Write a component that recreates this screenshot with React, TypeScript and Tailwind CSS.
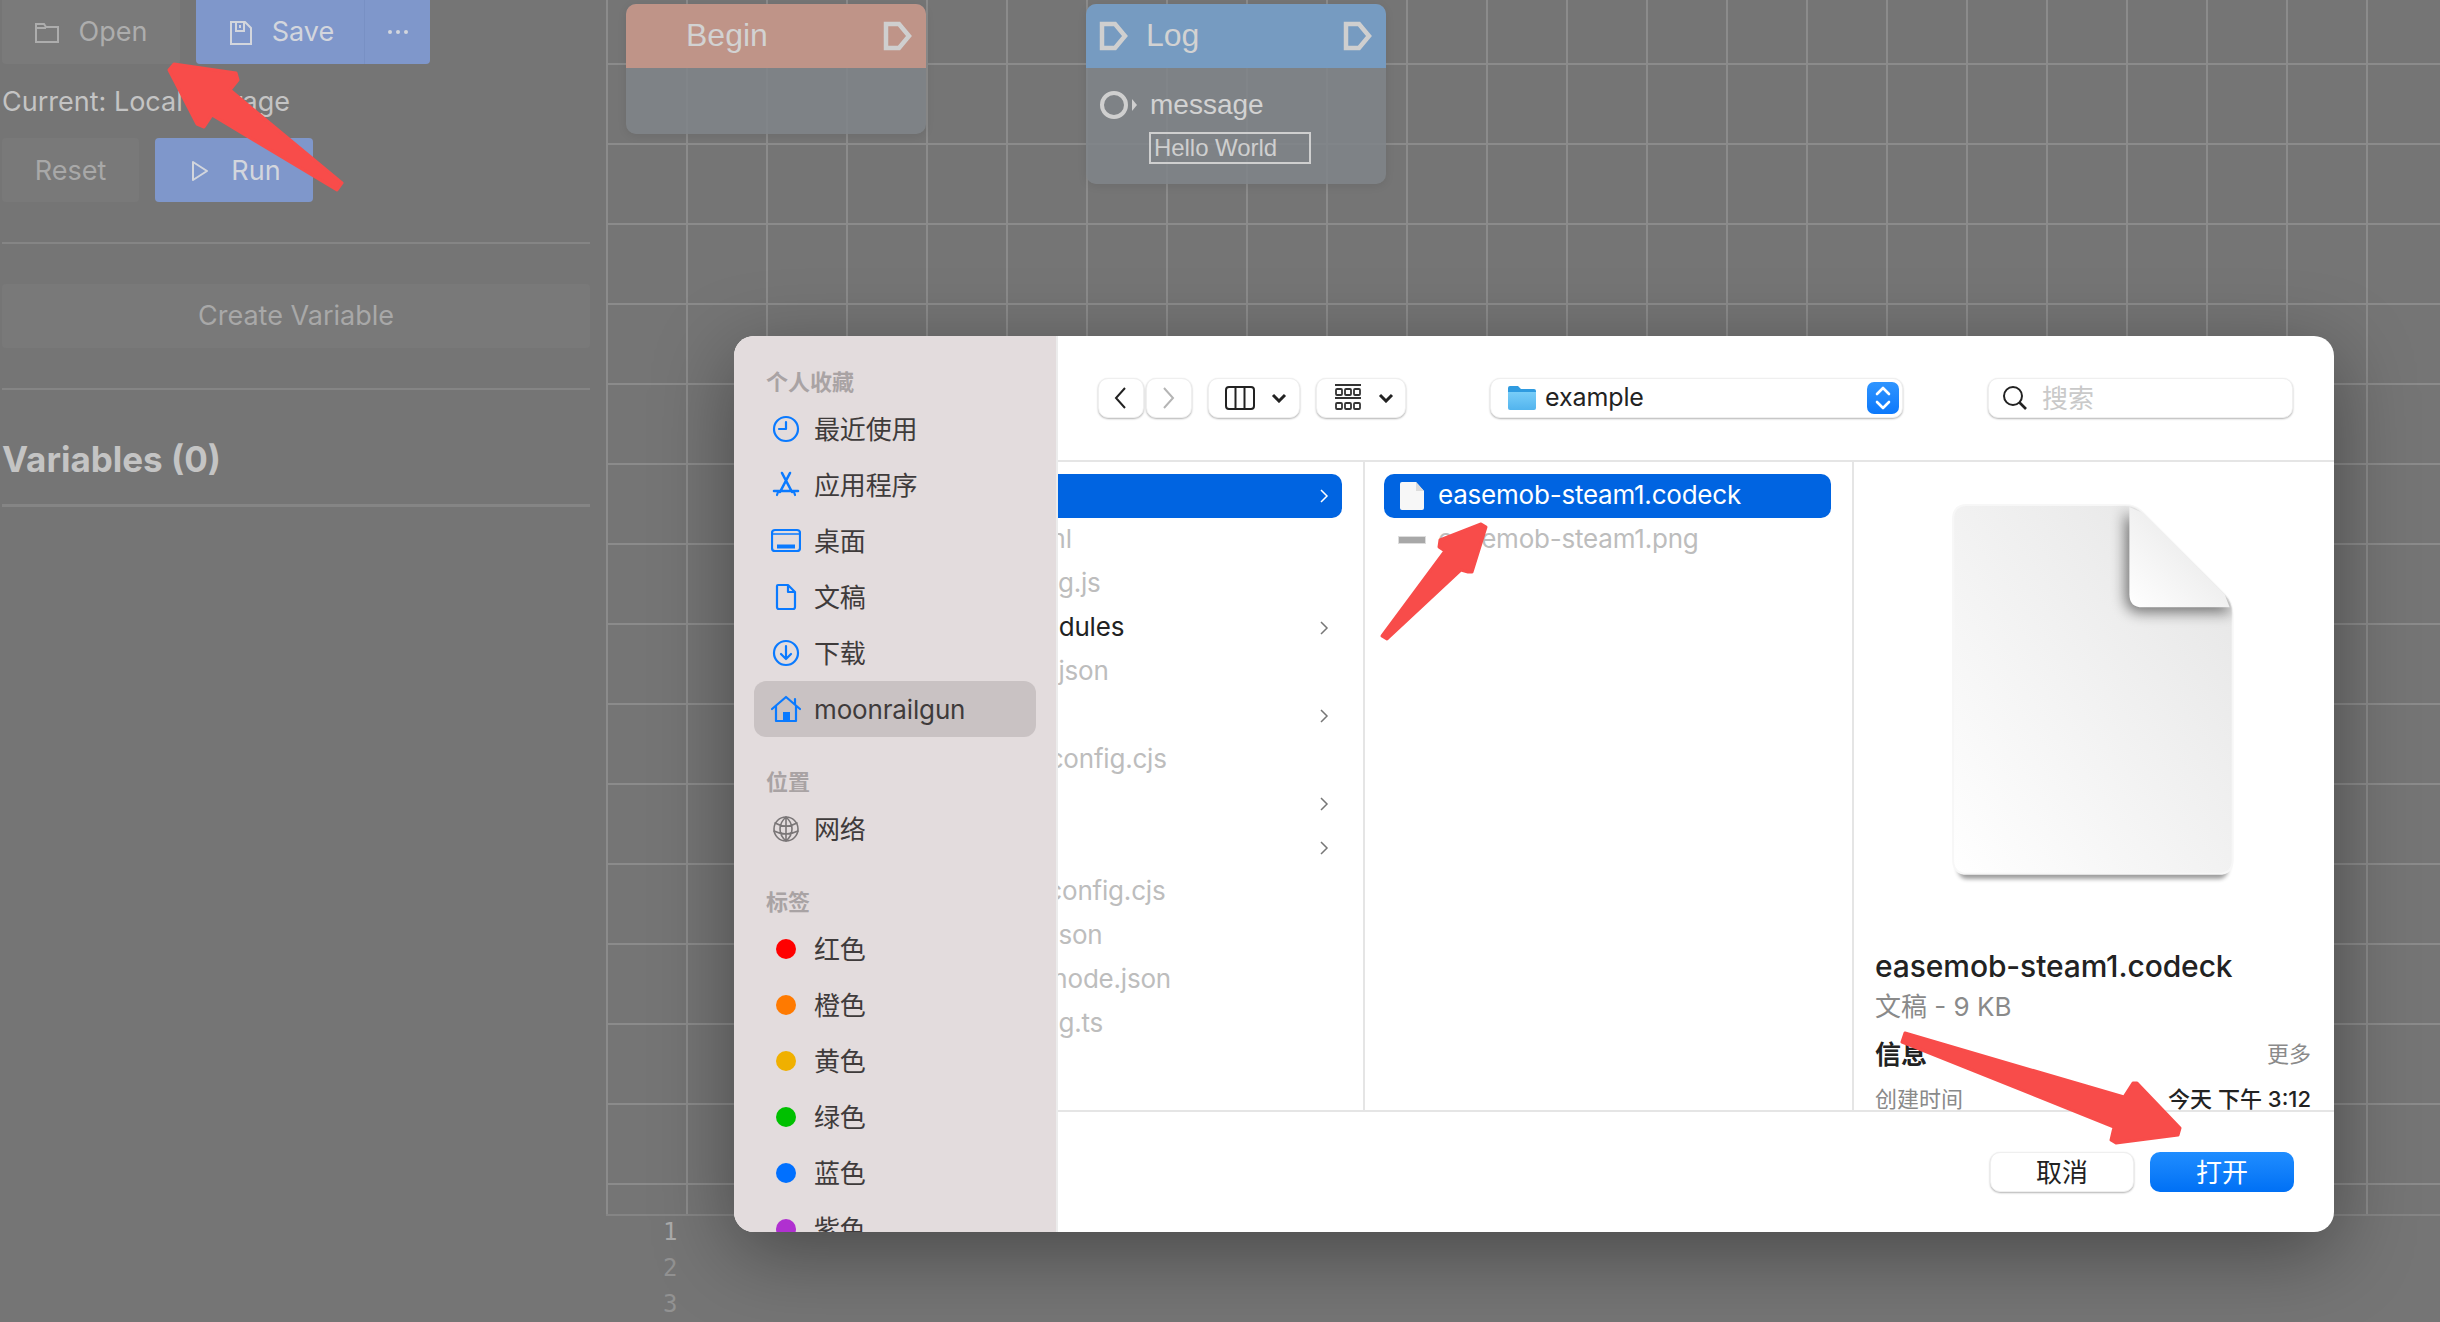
import React from 'react';

const BLUE = '#0a7aff';

const Pin = () => (
  <svg width="30" height="30" viewBox="0 0 30 30" fill="none" stroke="#cfcfcf" strokeWidth="4.5">
    <path d="M3 3 H16 L26 15 L16 27 H3 Z" />
  </svg>
);

const FolderIcon = () => (
  <svg width="24" height="22" viewBox="0 0 24 22" fill="none" stroke="currentColor" strokeWidth="2">
    <path d="M1 20 V2 H9 L11 5 H23 V20 Z M1 6 H11" />
  </svg>
);

const SaveIcon = () => (
  <svg width="22" height="24" viewBox="0 0 22 24" fill="none" stroke="currentColor" strokeWidth="2">
    <path d="M1 1 H15 L21 7 V23 H1 Z" />
    <path d="M6 1 V10 H14 V1 M10 4 V7" />
  </svg>
);

const PlayIcon = () => (
  <svg width="18" height="22" viewBox="0 0 18 22" fill="none" stroke="currentColor" strokeWidth="2" strokeLinejoin="round">
    <path d="M2 2 L16 11 L2 20 Z" />
  </svg>
);

const SideIcon = ({ name }: { name: string }) => {
  const stroke = name === 'globe' ? '#7a7677' : BLUE;
  return (
    <svg width="30" height="28" viewBox="0 0 30 28" fill="none" stroke={stroke} strokeWidth="2.2" strokeLinecap="round" strokeLinejoin="round">
      {name === 'clock' && (
        <>
          <circle cx="15" cy="14" r="12" />
          <path d="M15 7 V14 H8" />
        </>
      )}
      {name === 'app' && (
        <>
          <path d="M11 2 L21 21 M19 2 L9 21 M3 20 H27" strokeWidth="2.6" />
          <path d="M6 24 L7 21 M24 24 L23 21" />
        </>
      )}
      {name === 'desktop' && (
        <>
          <rect x="1" y="3" width="28" height="21" rx="3" />
          <path d="M1 7 H29" strokeWidth="1.6" />
          <path d="M6 19.5 H24" strokeWidth="4" strokeLinecap="butt" />
        </>
      )}
      {name === 'doc' && <path d="M7 2 H17 L24 9 V24 Q24 26 22 26 H8 Q6 26 6 24 V3 Q6 2 7 2 Z M17 2 V9 H24" />}
      {name === 'download' && (
        <>
          <circle cx="15" cy="14" r="12" />
          <path d="M15 7 V20 M10 15 L15 20 L20 15" />
        </>
      )}
      {name === 'home' && (
        <>
          <path d="M1 14 L15 2 L29 14 M5 11 V26 H25 V11 M24 4 V9" />
          <rect x="12" y="17" width="7" height="9" fill={BLUE} stroke="none" />
        </>
      )}
      {name === 'globe' && (
        <g strokeWidth="1.6">
          <circle cx="15" cy="14" r="12" />
          <path d="M15 2 C7 9 7 19 15 26 M15 2 C23 9 23 19 15 26 M4 8 C11 12 19 12 26 8 M3 16 C11 20 19 20 27 16 M15 2 V26" />
        </g>
      )}
    </svg>
  );
};

const SideRow = ({ icon, dot, label, active }: { icon?: string; dot?: string; label: string; active?: boolean }) => (
  <div className={`mx-[20px] h-[56px] rounded-[12px] pl-[17px] flex items-center gap-[13px] ${active ? 'bg-[#c9c2c3]' : ''}`}>
    <div className="w-[30px] flex justify-center">
      {icon && <SideIcon name={icon} />}
      {dot && <span className={`w-[20px] h-[20px] rounded-full ${dot}`}></span>}
    </div>
    <span className="text-[26px] tracking-[-0.15px] text-[#3f3b3b]">{label}</span>
  </div>
);

const SideHeading = ({ children, className = '' }: { children: React.ReactNode; className?: string }) => (
  <div className={`h-[36px] pl-[32px] pb-[2px] flex items-center text-[22px] font-bold text-[#a9a3a4] ${className}`}>{children}</div>
);

const Chevron = ({ color }: { color: string }) => (
  <svg width="10" height="16" viewBox="0 0 10 16" fill="none" stroke={color} strokeWidth="1.5">
    <path d="M2 2 L8 8 L2 14" />
  </svg>
);

const ChevronDown = () => (
  <svg width="16" height="10" viewBox="0 0 16 10" fill="none" stroke="#222" strokeWidth="3">
    <path d="M2 2 L8 8 L14 2" />
  </svg>
);

const files = [
  { name: 'example', folder: true, selected: true },
  { name: 'index.html' },
  { name: 'jest.config.js' },
  { name: 'node_modules', folder: true },
  { name: 'package.json' },
  { name: 'patches', folder: true },
  { name: 'postcss.config.cjs' },
  { name: 'public', folder: true },
  { name: 'src', folder: true },
  { name: 'tailwind.config.cjs' },
  { name: 'tsconfig.json' },
  { name: 'tsconfig.node.json' },
  { name: 'vite.config.ts' },
];

const toolButton = 'h-[40px] bg-white rounded-[10px] border border-[#efefef] shadow-[0_1px_2px_rgba(0,0,0,0.3)] flex items-center justify-center';

const Dialog = () => (
  <div className="absolute left-[734px] top-[336px] w-[1600px] h-[896px] bg-white rounded-[20px] overflow-hidden flex shadow-[0_20px_80px_rgba(0,0,0,0.38)] [font-family:Inter,'Noto_Sans_CJK_SC',sans-serif]">
    {/* sidebar */}
    <div className="w-[324px] shrink-0 bg-[#e3dcdd] border-r-2 border-[#ececec] pt-[29px] overflow-hidden">
      <SideHeading>个人收藏</SideHeading>
      <SideRow icon="clock" label="最近使用" />
      <SideRow icon="app" label="应用程序" />
      <SideRow icon="desktop" label="桌面" />
      <SideRow icon="doc" label="文稿" />
      <SideRow icon="download" label="下载" />
      <SideRow icon="home" label="moonrailgun" active />
      <SideHeading className="mt-[28px]">位置</SideHeading>
      <SideRow icon="globe" label="网络" />
      <SideHeading className="mt-[28px]">标签</SideHeading>
      <SideRow dot="bg-[#ff0000]" label="红色" />
      <SideRow dot="bg-[#ff7a00]" label="橙色" />
      <SideRow dot="bg-[#f0b000]" label="黄色" />
      <SideRow dot="bg-[#00c000]" label="绿色" />
      <SideRow dot="bg-[#0070ff]" label="蓝色" />
      <SideRow dot="bg-[#b030d0]" label="紫色" />
    </div>

    <div className="flex-1 min-w-0 flex flex-col">
      {/* toolbar */}
      <div className="h-[126px] shrink-0 border-b-2 border-[#e5e5e5] pl-[40px] flex items-center">
        <button className={`${toolButton} w-[46px] pr-[3px]`}>
          <svg width="14" height="24" viewBox="0 0 14 24" fill="none" stroke="#222" strokeWidth="2"><path d="M12 2 L3 12 L12 22" /></svg>
        </button>
        <button className={`${toolButton} w-[46px] ml-[2px]`}>
          <svg width="14" height="24" viewBox="0 0 14 24" fill="none" stroke="#b5b5b5" strokeWidth="2"><path d="M2 2 L11 12 L2 22" /></svg>
        </button>
        <button className={`${toolButton} w-[92px] ml-[16px] gap-[16px] pl-[4px]`}>
          <svg width="30" height="24" viewBox="0 0 30 24" fill="none" stroke="#222" strokeWidth="2">
            <rect x="1" y="1" width="28" height="22" rx="3" />
            <path d="M10.5 1 V23 M19.5 1 V23" />
          </svg>
          <ChevronDown />
        </button>
        <button className={`${toolButton} w-[90px] ml-[16px] gap-[16px] pl-[6px]`}>
          <svg width="28" height="28" viewBox="0 0 28 28" fill="none" stroke="#333" strokeWidth="1.8">
            <path d="M1 1 H27 M1 14 H27" />
            <rect x="2" y="5" width="6" height="6" rx="1" />
            <rect x="11" y="5" width="6" height="6" rx="1" />
            <rect x="20" y="5" width="6" height="6" rx="1" />
            <rect x="2" y="19" width="6" height="6" rx="1" />
            <rect x="11" y="19" width="6" height="6" rx="1" />
            <rect x="20" y="19" width="6" height="6" rx="1" />
          </svg>
          <ChevronDown />
        </button>
        <div className={`${toolButton} w-[413px] ml-[84px] !justify-start pl-[16px] pr-[3px]`}>
          <svg width="30" height="26" viewBox="0 0 30 26">
            <defs>
              <linearGradient id="fold" x1="0" y1="0" x2="0" y2="1">
                <stop offset="0" stopColor="#78cdf8" />
                <stop offset="1" stopColor="#52b4ee" />
              </linearGradient>
            </defs>
            <path d="M1 3 Q1 1 3 1 H11 L14 4 H27 Q29 4 29 6 V10 H1 Z" fill="#2f9be0" />
            <path d="M1 7 H29 V23 Q29 25 27 25 H3 Q1 25 1 23 Z" fill="url(#fold)" />
          </svg>
          <span className="ml-[8px] text-[25px] tracking-[-0.1px] text-[#222]">example</span>
          <span className="ml-auto w-[32px] h-[32px] rounded-[7px] bg-gradient-to-b from-[#2f95ff] to-[#0a78fb] flex items-center justify-center">
            <svg width="18" height="26" viewBox="0 0 18 26" fill="none" stroke="#fff" strokeWidth="2.6" strokeLinecap="round" strokeLinejoin="round">
              <path d="M3 9 L9 3 L15 9 M3 17 L9 23 L15 17" />
            </svg>
          </span>
        </div>
        <div className={`${toolButton} w-[305px] ml-[85px] !justify-start pl-[13px]`}>
          <svg width="26" height="26" viewBox="0 0 26 26" fill="none" stroke="#222" strokeWidth="2">
            <circle cx="11" cy="11" r="9" />
            <path d="M17.5 17.5 L24 24" strokeWidth="2.6" />
          </svg>
          <span className="ml-[14px] text-[26px] text-[#c9c9c9]">搜索</span>
        </div>
      </div>

      {/* columns */}
      <div className="flex-1 min-h-0 flex">
        <div className="w-[307px] shrink-0 border-r-2 border-[#e5e5e5] pt-[12px] overflow-hidden">
          {files.map(f => (
            <div
              key={f.name}
              className={`h-[44px] mr-[21px] pr-[13px] flex items-center justify-between rounded-r-[10px] ${f.selected ? 'bg-[#0064e1]' : ''}`}
            >
              <span className={`-ml-[111px] pb-[3px] text-[26px] tracking-[-0.2px] whitespace-nowrap ${f.folder ? 'text-[#222]' : 'text-[#bdbdbd]'}`}>{f.name}</span>
              {f.folder && <Chevron color={f.selected ? '#ffffff' : '#777777'} />}
            </div>
          ))}
        </div>
        <div className="w-[489px] shrink-0 border-r-2 border-[#e5e5e5] pt-[12px] pl-[19px] pr-[21px]">
          <div className="h-[44px] rounded-[10px] bg-[#0064e1] pl-[16px] flex items-center">
            <svg width="24" height="28" viewBox="0 0 24 28" className="shrink-0">
              <path d="M2 0 H16 L24 9 V26 Q24 28 22 28 H2 Q0 28 0 26 V2 Q0 0 2 0 Z" fill="#f7f7f7" />
              <path d="M16 0 V9 H24 Z" fill="#dcdcdc" />
            </svg>
            <span className="ml-[14px] pb-[3px] text-[26px] tracking-[-0.22px] text-white whitespace-nowrap">easemob-steam1.codeck</span>
          </div>
          <div className="h-[44px] pl-[14px] flex items-center">
            <span className="w-[28px] h-[8px] shrink-0 bg-[#a8a8a8] border border-[#dddddd]"></span>
            <span className="ml-[12px] pb-[3px] text-[26px] tracking-[-0.2px] text-[#bdbdbd] whitespace-nowrap">easemob-steam1.png</span>
          </div>
        </div>

        {/* preview */}
        <div className="flex-1 min-w-0 overflow-hidden pl-[21px] pr-[23px]">
          <svg width="294" height="385" viewBox="0 0 290 380" className="block mt-[41px] ml-[78px] overflow-visible">
            <defs>
              <linearGradient id="paper" x1="0" y1="1" x2="1" y2="0">
                <stop offset="0" stopColor="#ffffff" />
                <stop offset="1" stopColor="#e4e4e4" />
              </linearGradient>
              <linearGradient id="flap" x1="0" y1="1" x2="1" y2="0">
                <stop offset="0" stopColor="#ffffff" />
                <stop offset="1" stopColor="#e2e2e2" />
              </linearGradient>
              <filter id="blur6" x="-30%" y="-30%" width="160%" height="160%"><feGaussianBlur stdDeviation="7" /></filter>
              <filter id="blur2" x="-10%" y="-10%" width="120%" height="120%"><feGaussianBlur stdDeviation="2" /></filter>
              <clipPath id="sheet">
                <path d="M14 2 H170 Q180 2 188 10 L268 90 Q276 98 276 110 V352 Q276 366 262 366 H14 Q0 366 0 352 V16 Q0 2 14 2 Z" />
              </clipPath>
            </defs>
            <path d="M4 300 H272 V356 Q272 371 262 371 H14 Q4 371 4 356 Z" fill="#000" opacity="0.38" filter="url(#blur2)" />
            <path d="M14 2 H170 Q180 2 188 10 L268 90 Q276 98 276 110 V352 Q276 366 262 366 H14 Q0 366 0 352 V16 Q0 2 14 2 Z" fill="url(#paper)" stroke="#f7f7f7" strokeWidth="2" />
            <g clipPath="url(#sheet)">
              <path d="M170 8 V92 Q170 108 186 108 H272 L276 104 Z" fill="#000" opacity="0.5" filter="url(#blur6)" />
            </g>
            <path d="M174 4 L188 10 L268 90 L273 103 H187 Q174 103 174 90 Z" fill="url(#flap)" />
          </svg>
          <div className="mt-[58px] h-[40px] leading-[40px] text-[30px] font-medium tracking-[-0.1px] text-[#222] whitespace-nowrap">easemob-steam1.codeck</div>
          <div className="h-[41px] pt-[1px] leading-[40px] text-[26px] text-[#8a8a8a] whitespace-nowrap">文稿 - 9 KB</div>
          <div className="mt-[7px] h-[40px] flex items-center justify-between">
            <span className="text-[26px] font-bold text-[#222]">信息</span>
            <span className="text-[22px] text-[#8a8a8a]">更多</span>
          </div>
          <div className="mt-[10px] h-[30px] flex items-center justify-between text-[22px]">
            <span className="text-[#8a8a8a]">创建时间</span>
            <span className="font-medium text-[#222]">今天 下午 3:12</span>
          </div>
        </div>
      </div>

      {/* footer */}
      <div className="h-[122px] shrink-0 border-t-2 border-[#e5e5e5] pr-[40px] flex items-center justify-end gap-[16px]">
        <button className="w-[144px] h-[40px] rounded-[10px] bg-white border border-[#efefef] shadow-[0_1px_2px_rgba(0,0,0,0.3)] text-[26px] text-[#222]">取消</button>
        <button className="w-[144px] h-[40px] rounded-[10px] bg-gradient-to-b from-[#1f8dff] to-[#0070f5] text-[26px] text-white">打开</button>
      </div>
    </div>
  </div>
);

const Arrows = () => (
  <svg width="2440" height="1322" viewBox="0 0 2440 1322" className="absolute left-0 top-0 pointer-events-none" fill="#f84c4a" stroke="#f84c4a" strokeWidth="3" strokeLinejoin="round">
    <path d="M342 183 L337 190 L212 115 L204 127 L197 124 L169 70 L174 64 L236 73 L238 80 L230 90 Z" />
    <path d="M1382 636 L1387 639 L1461 570 L1468 572 L1472 572 L1486 527 L1481 524 L1440 540 L1439 547 L1445 551 Z" />
    <path d="M1905 1033 L1902 1042 L2114 1127 L2111 1140 L2116 1143 L2178 1135 L2180 1128 L2137 1083 L2133 1083 L2124 1097 Z" />
  </svg>
);

export default function App() {
  return (
    <div className="relative w-[2440px] h-[1322px] overflow-hidden bg-[#757575] flex [font-family:Inter,sans-serif]">
      {/* left panel */}
      <aside className="w-[606px] shrink-0 pl-[2px] pr-[16px]">
        <div className="h-[64px] flex gap-[16px]">
          <button className="w-[178px] pt-[1px] rounded-b-[4px] bg-[#7a7a7a] text-[#adadad] text-[27px] flex items-center justify-center gap-[20px]">
            <FolderIcon /> Open
          </button>
          <div className="w-[234px] rounded-b-[4px] bg-[#7f97cb] text-[#d3d6dd] text-[27px] flex">
            <button className="w-[169px] pl-[4px] pt-[1px] border-r border-[#7890c4] flex items-center justify-center gap-[20px]">
              <SaveIcon /> Save
            </button>
            <button className="flex-1 flex items-center justify-center gap-[4px]">
              <span className="w-[4px] h-[4px] rounded-full bg-[#d3d6dd]"></span>
              <span className="w-[4px] h-[4px] rounded-full bg-[#d3d6dd]"></span>
              <span className="w-[4px] h-[4px] rounded-full bg-[#d3d6dd]"></span>
            </button>
          </div>
        </div>
        <div className="h-[74px] pt-[2px] flex items-center text-[27px] text-[#c4c4c4]">Current: Local Storage</div>
        <div className="h-[64px] flex gap-[16px]">
          <button className="w-[137px] pt-[2px] rounded-[4px] bg-[#797979] text-[#a8a8a8] text-[27px]">Reset</button>
          <button className="w-[158px] pl-[4px] pt-[2px] rounded-[4px] bg-[#7f97cb] text-[#d3d6dd] text-[27px] flex items-center justify-center gap-[22px]">
            <PlayIcon /> Run
          </button>
        </div>
        <div className="mt-[40px] h-[2px] bg-[#858585]"></div>
        <button className="mt-[40px] w-full h-[64px] pt-[1px] rounded-[4px] bg-[#797979] text-[#a8a8a8] text-[27px]">Create Variable</button>
        <div className="mt-[40px] h-[2px] bg-[#858585]"></div>
        <h2 className="h-[114px] pt-[24px] flex items-center text-[35px] font-bold text-[#c4c4c4]">Variables (0)</h2>
        <div className="h-[3px] bg-[#858585]"></div>
      </aside>

      {/* canvas + editor */}
      <main className="flex-1 min-w-0 flex flex-col">
        <div className="relative h-[1214px] shrink-0 overflow-hidden [background-image:linear-gradient(to_right,#8b8b8b_2px,transparent_2px),linear-gradient(to_bottom,#8b8b8b_2px,transparent_2px)] [background-size:80px_80px] [background-position:0_63px] [font-family:'Liberation_Sans',sans-serif]">
          {/* Begin node */}
          <div className="absolute left-[20px] top-[4px] w-[300px] h-[130px] rounded-[10px] overflow-hidden bg-[#808488]/90 shadow-[0_2px_10px_rgba(0,0,0,0.08)]">
            <div className="relative h-[64px] bg-[#bf9488]">
              <span className="absolute left-[60px] top-[13px] text-[32px] leading-[37px] text-[#d2d2d2]">Begin</span>
              <div className="absolute left-[257px] top-[17px]"><Pin /></div>
            </div>
          </div>
          {/* Log node */}
          <div className="absolute left-[480px] top-[4px] w-[300px] h-[180px] rounded-[10px] overflow-hidden bg-[#808488]/90 shadow-[0_2px_10px_rgba(0,0,0,0.08)]">
            <div className="relative h-[64px] bg-[#769bc1]">
              <div className="absolute left-[13px] top-[17px]"><Pin /></div>
              <span className="absolute left-[60px] top-[13px] text-[32px] leading-[37px] text-[#d2d2d2]">Log</span>
              <div className="absolute left-[257px] top-[17px]"><Pin /></div>
            </div>
            <svg width="42" height="30" viewBox="0 0 42 30" className="absolute left-[13px] top-[86px]" fill="none">
              <circle cx="15" cy="15" r="12" stroke="#cfcfcf" strokeWidth="4" />
              <path d="M33 9 L38 15 L33 21 Z" fill="#cfcfcf" />
            </svg>
            <span className="absolute left-[64px] top-[85px] text-[28px] leading-[32px] text-[#d2d2d2]">message</span>
            <div className="absolute left-[63px] top-[128px] w-[162px] h-[32px] border-2 border-[#cfcfcf] pl-[3px] text-[24px] leading-[27px] tracking-[-0.05px] text-[#cfcfcf]">Hello World</div>
          </div>
        </div>
        <div className="flex-1 border-t-2 border-[#858585] pl-[57px] [font-family:'DejaVu_Sans_Mono',monospace] text-[24px] leading-[36px] text-[#929292]">
          <div className="-mt-[2px] text-[#ababab]">1</div>
          <div>2</div>
          <div>3</div>
        </div>
      </main>

      <Dialog />
      <Arrows />
    </div>
  );
}
